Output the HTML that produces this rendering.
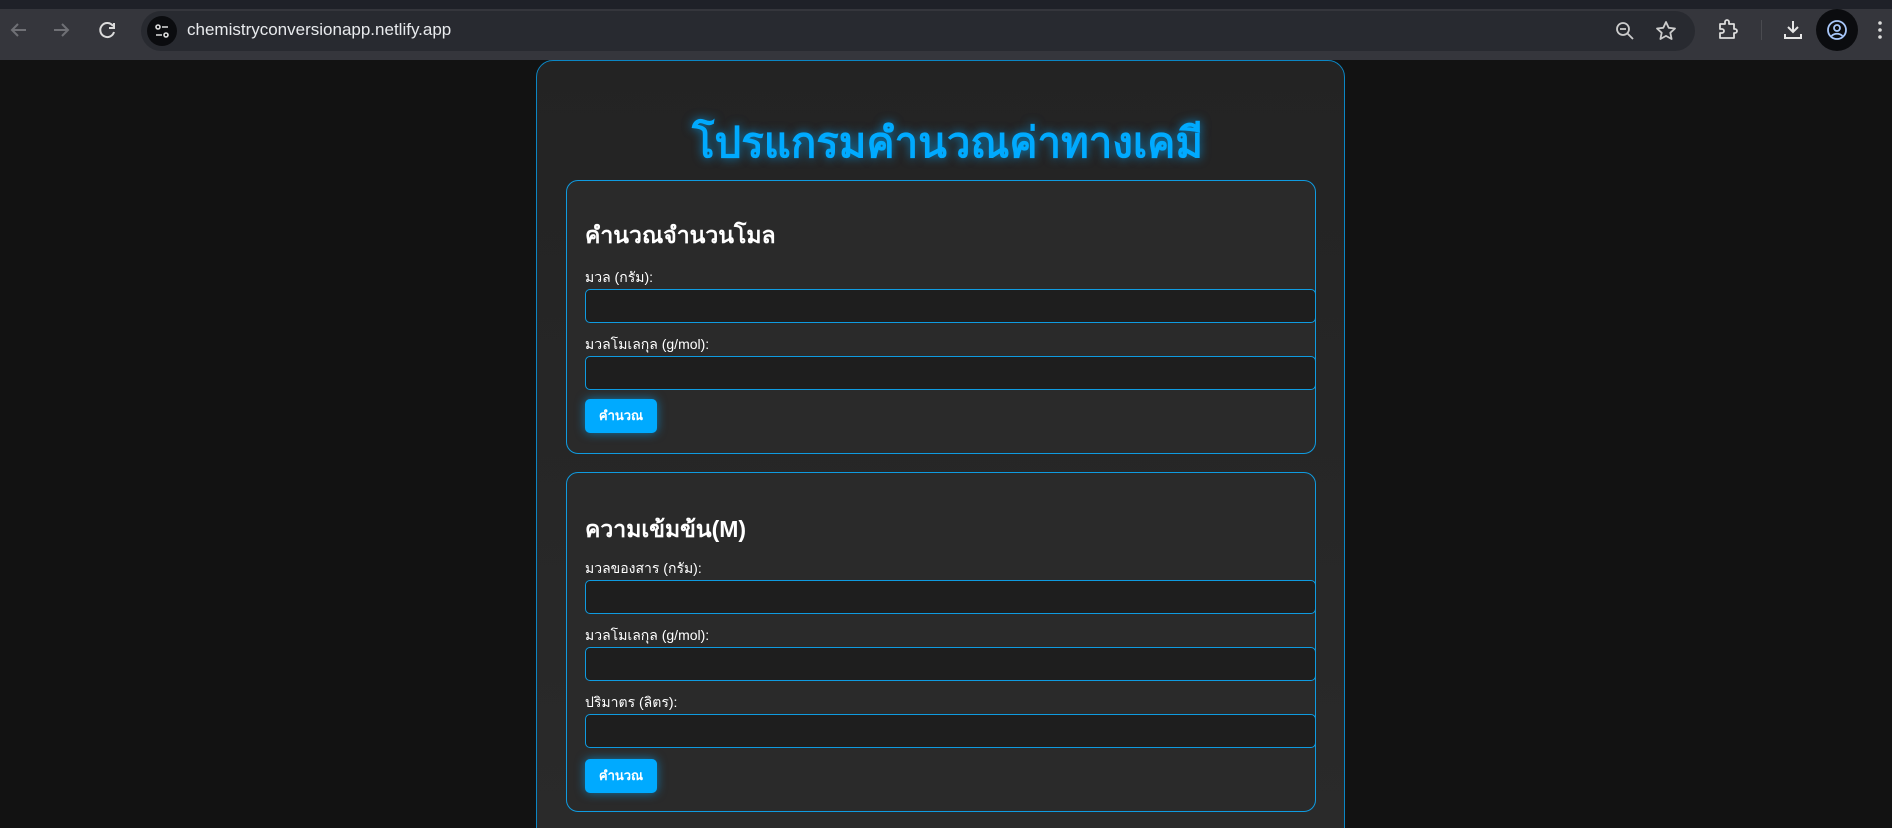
<!DOCTYPE html>
<html><head><meta charset="utf-8"><style>
*{box-sizing:border-box;margin:0;padding:0}
html{width:1892px;height:828px;overflow:hidden}
body{width:1892px;height:828px;overflow:hidden;background:#121212;font-family:"Liberation Sans","DejaVu Sans",sans-serif;position:relative}
.top{position:absolute;left:0;top:0;width:1892px;height:9px;background:#1f2128}
.bar{position:absolute;left:0;top:9px;width:1892px;height:51px;background:#35363c}
.omni{position:absolute;left:141px;top:11px;width:1554px;height:40px;border-radius:20px;background:#282a30}
.url{position:absolute;left:187px;top:20px;font-size:17px;color:#e8eaed}
.ic{position:absolute}
.cont{position:absolute;left:536px;top:60px;width:809px;height:790px;border:1px solid #0b86c4;border-radius:17px;background:linear-gradient(180deg,#232323,#2a2a2a)}
h1{position:absolute;left:543px;width:809px;top:110px;text-align:center;font-size:42px;font-weight:bold;color:#00aaff;text-shadow:0 0 10px rgba(0,170,255,.7)}
.card{position:absolute;left:566px;width:750px;border:1.5px solid #0f9be0;border-radius:12px;background:#2a2a2a}
h2{position:absolute;left:585px;font-size:23px;font-weight:bold;color:#fff}
.lb{position:absolute;left:585px;font-size:14px;color:#fff}
.in{position:absolute;left:585px;width:731px;height:34px;background:#1e1e1e;border:1.5px solid #0f9be0;border-radius:5px}
.bt{position:absolute;left:585px;width:72px;height:34px;background:#00aaff;border-radius:5px;color:#fff;font-weight:bold;font-size:13px;text-align:center;line-height:34px;box-shadow:0 0 10px rgba(0,170,255,.6)}
</style></head><body>
<div class="top"></div><div class="bar"></div>
<svg class="ic" style="left:8px;top:20px" width="22" height="20" viewBox="0 0 22 20"><path d="M18 10H4M10 4l-6 6 6 6" stroke="#6f7075" stroke-width="2" fill="none"/></svg>
<svg class="ic" style="left:50px;top:20px" width="22" height="20" viewBox="0 0 22 20"><path d="M4 10h14M12 4l6 6-6 6" stroke="#6f7075" stroke-width="2" fill="none"/></svg>
<svg class="ic" style="left:97px;top:20px" width="22" height="20" viewBox="0 0 22 20"><path d="M16 6A7 7 0 1 0 17 12" stroke="#dcdcdc" stroke-width="2" fill="none"/><path d="M17 3v5h-5" stroke="#dcdcdc" stroke-width="2" fill="none"/></svg>
<div class="omni"></div>
<div class="ic" style="left:147px;top:16px;width:30px;height:30px;border-radius:50%;background:#0b0c0f"></div>
<svg class="ic" style="left:153px;top:22px" width="18" height="18" viewBox="0 0 18 18"><circle cx="5" cy="5" r="2" stroke="#ddd" stroke-width="1.6" fill="none"/><path d="M9 5h6M3 13h6" stroke="#ddd" stroke-width="1.6"/><circle cx="13" cy="13" r="2" stroke="#ddd" stroke-width="1.6" fill="none"/></svg>
<div class="url">chemistryconversionapp.netlify.app</div>
<svg class="ic" style="left:1614px;top:20px" width="22" height="22" viewBox="0 0 22 22"><circle cx="9" cy="9" r="6" stroke="#ccc" stroke-width="1.8" fill="none"/><path d="M6 9h6M13.5 13.5L19 19" stroke="#ccc" stroke-width="1.8"/></svg>
<svg class="ic" style="left:1654px;top:19px" width="24" height="24" viewBox="0 0 24 24"><path d="M12 3l2.7 5.8 6.3.7-4.7 4.3 1.3 6.2L12 16.9 6.4 20l1.3-6.2L3 9.5l6.3-.7z" stroke="#ccc" stroke-width="1.8" fill="none" stroke-linejoin="round"/></svg>
<svg class="ic" style="left:1716px;top:18px" width="24" height="24" viewBox="0 0 24 24"><path d="M4 6h5V4a2 2 0 0 1 4 0v2h5v5h1a2 2 0 0 1 0 4h-1v5H4v-5h2a2 2 0 0 0 0-4H4z" stroke="#ddd" stroke-width="1.8" fill="none" stroke-linejoin="round"/></svg>
<div class="ic" style="left:1761px;top:20px;width:1px;height:20px;background:#4a4b50"></div>
<svg class="ic" style="left:1781px;top:18px" width="24" height="24" viewBox="0 0 24 24"><path d="M12 3v11M7 9l5 5 5-5M4 16v4h16v-4" stroke="#e6e6e6" stroke-width="2" fill="none"/></svg>
<div class="ic" style="left:1816px;top:9px;width:42px;height:42px;border-radius:50%;background:#0b0c0f"></div>
<svg class="ic" style="left:1826px;top:19px" width="22" height="22" viewBox="0 0 22 22"><circle cx="11" cy="11" r="9" stroke="#a8c7fa" stroke-width="1.8" fill="none"/><circle cx="11" cy="9" r="3" stroke="#a8c7fa" stroke-width="1.8" fill="none"/><path d="M5.5 17c3-3 8-3 11 0" stroke="#a8c7fa" stroke-width="1.8" fill="none"/></svg>
<svg class="ic" style="left:1876px;top:20px" width="8" height="20" viewBox="0 0 8 20"><circle cx="4" cy="3" r="1.8" fill="#ddd"/><circle cx="4" cy="10" r="1.8" fill="#ddd"/><circle cx="4" cy="17" r="1.8" fill="#ddd"/></svg>

<div class="cont"></div>
<h1>โปรแกรมคำนวณค่าทางเคมี</h1>

<div class="card" style="top:180px;height:274px"></div>
<h2 style="top:218px">คำนวณจำนวนโมล</h2>
<div class="lb" style="top:267px">มวล (กรัม):</div>
<div class="in" style="top:289px"></div>
<div class="lb" style="top:334px">มวลโมเลกุล (g/mol):</div>
<div class="in" style="top:356px"></div>
<div class="bt" style="top:399px">คำนวณ</div>

<div class="card" style="top:472px;height:340px"></div>
<h2 style="top:512px">ความเข้มข้น(M)</h2>
<div class="lb" style="top:558px">มวลของสาร (กรัม):</div>
<div class="in" style="top:580px"></div>
<div class="lb" style="top:625px">มวลโมเลกุล (g/mol):</div>
<div class="in" style="top:647px"></div>
<div class="lb" style="top:692px">ปริมาตร (ลิตร):</div>
<div class="in" style="top:714px"></div>
<div class="bt" style="top:759px">คำนวณ</div>
</body></html>
